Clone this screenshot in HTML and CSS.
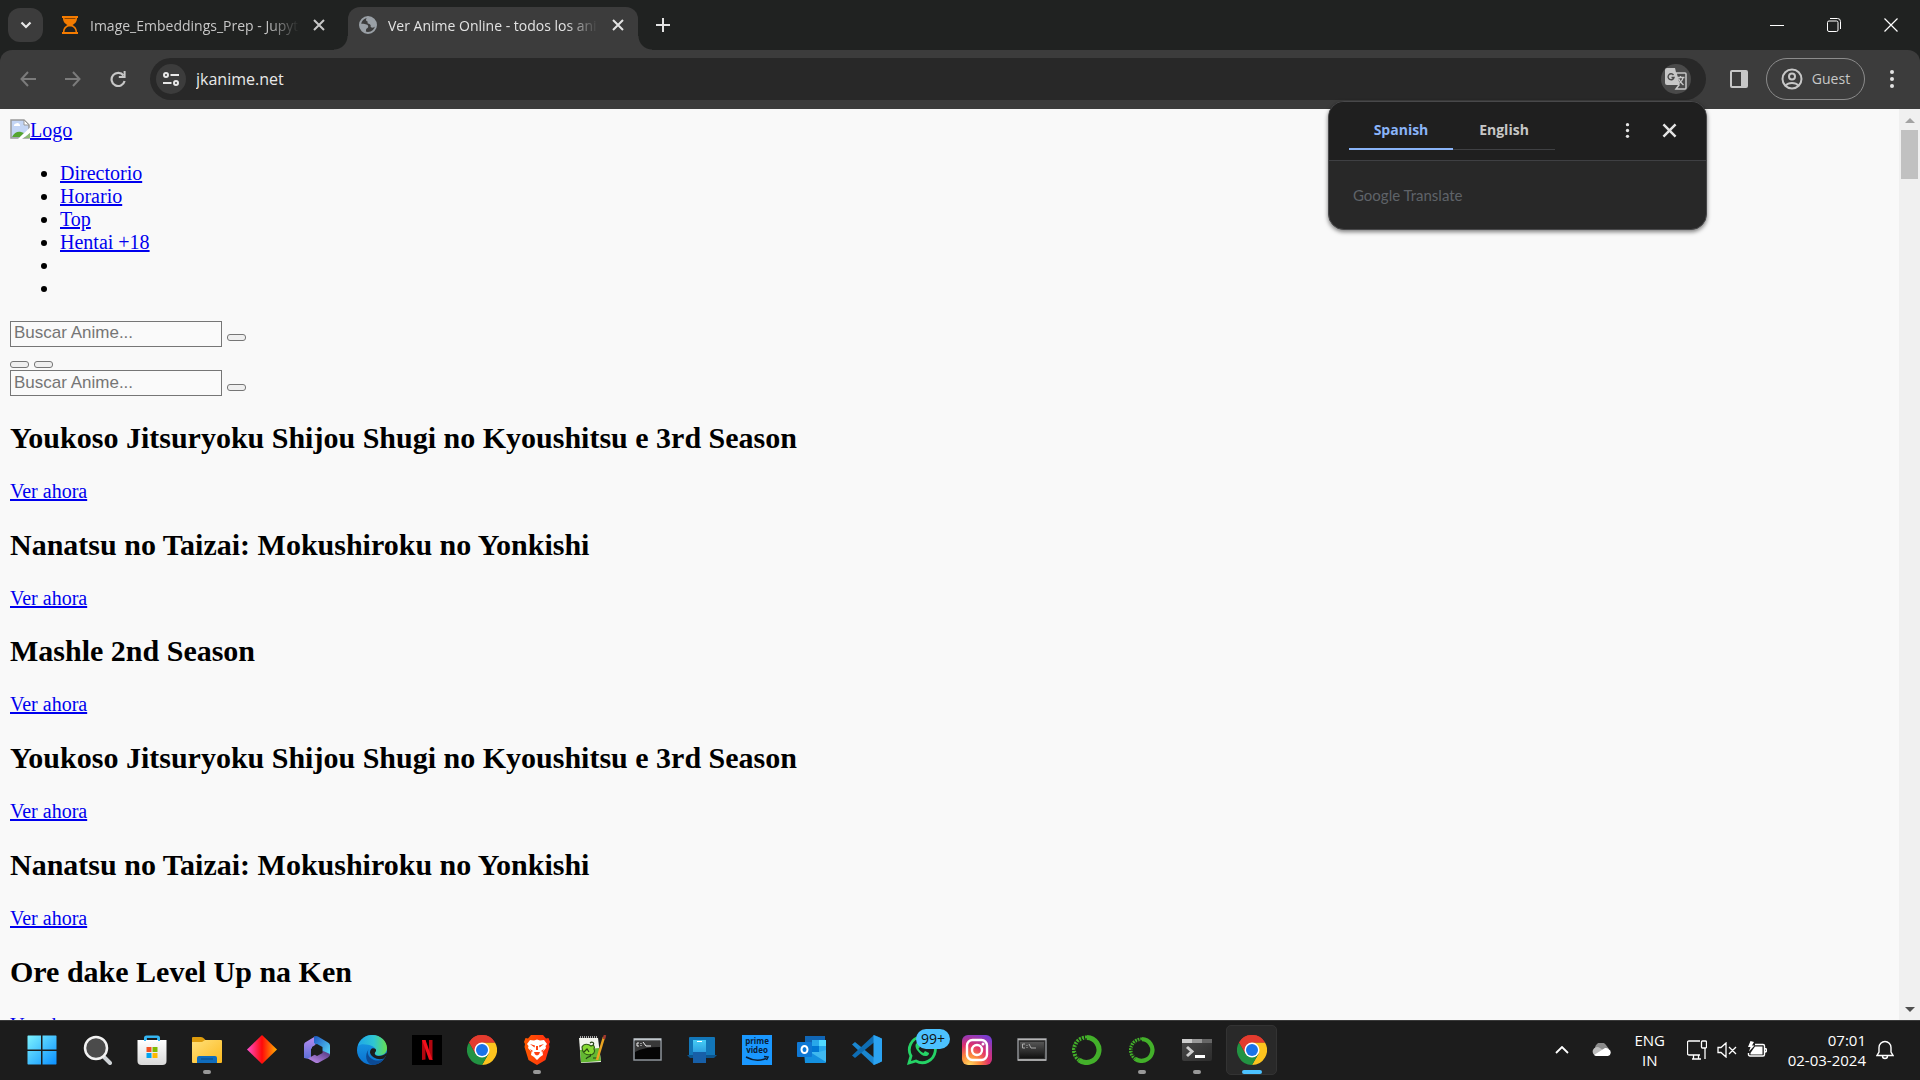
FILE: index.html
```html
<!DOCTYPE html>
<html lang="es">
<head>
<meta charset="utf-8">
<meta name="viewport" content="width=device-width, initial-scale=1">
<title>Ver Anime Online - todos los animes</title>
<link rel="stylesheet" href="styles.css">
</head>
<body>
<svg class="defs" width="0" height="0" aria-hidden="true">
  <defs>
    <linearGradient id="g-win" x1="0" y1="0" x2="1" y2="1"><stop offset="0" stop-color="#7df3ff"/><stop offset="1" stop-color="#0a8fff"/></linearGradient>
    <linearGradient id="g-store" x1="0" y1="0" x2="0" y2="1"><stop offset="0" stop-color="#fff"/><stop offset="1" stop-color="#d9d9d9"/></linearGradient>
    <linearGradient id="g-folder" x1="0" y1="0" x2="1" y2="1"><stop offset="0" stop-color="#ffe07a"/><stop offset="1" stop-color="#fcb91e"/></linearGradient>
    <linearGradient id="g-diamond"><stop offset="0" stop-color="#ff4fd0"/><stop offset=".5" stop-color="#ff0a0a"/><stop offset="1" stop-color="#ffb300"/></linearGradient>
    <linearGradient id="g-m1" x1="0" y1="0" x2="0" y2="1"><stop offset="0" stop-color="#b98cf0"/><stop offset="1" stop-color="#5a6fd8"/></linearGradient>
    <linearGradient id="g-m2" x1="0" y1="0" x2="1" y2="1"><stop offset="0" stop-color="#1c57c4"/><stop offset="1" stop-color="#5fe0fb"/></linearGradient>
    <linearGradient id="g-m3" x1="0" y1="1" x2="1" y2="0"><stop offset="0" stop-color="#c893f5"/><stop offset="1" stop-color="#4a3277"/></linearGradient>
    <linearGradient id="g-edge" x1="0" y1="0" x2="1" y2="0"><stop offset="0" stop-color="#1fa7e8"/><stop offset=".55" stop-color="#2fc6d3"/><stop offset="1" stop-color="#66e04e"/></linearGradient>
    <linearGradient id="g-edge2" x1="0" y1="0" x2="0" y2="1"><stop offset="0" stop-color="#1ba0e6"/><stop offset="1" stop-color="#0a70d0"/></linearGradient>
    <linearGradient id="g-brave" x1="0" y1="0" x2="1" y2="0"><stop offset="0" stop-color="#ff5a00"/><stop offset="1" stop-color="#ff2a10"/></linearGradient>
    <linearGradient id="g-phone" x1="0" y1="0" x2="0" y2="1"><stop offset="0" stop-color="#46cdf5"/><stop offset="1" stop-color="#1778cf"/></linearGradient>
    <radialGradient id="g-insta" cx=".25" cy="1" r="1.1"><stop offset="0" stop-color="#ffd860"/><stop offset=".3" stop-color="#fd8a3c"/><stop offset=".6" stop-color="#e1306c"/><stop offset="1" stop-color="#7a3cd0"/></radialGradient>
    <linearGradient id="g-term" x1="0" y1="0" x2="1" y2="1"><stop offset="0" stop-color="#4a4a4a"/><stop offset="1" stop-color="#2c2c2c"/></linearGradient>
    <linearGradient id="g-gloss" x1="0" y1="0" x2="0" y2="1"><stop offset="0" stop-color="#555"/><stop offset="1" stop-color="#111"/></linearGradient>
    <symbol id="i-close" viewBox="0 0 14 14"><path d="M2 2l10 10M12 2L2 12" fill="none" stroke="currentColor" stroke-width="2"/></symbol>
    <symbol id="i-dots" viewBox="0 0 6 20"><circle cx="3" cy="3" r="2" fill="currentColor"/><circle cx="3" cy="10" r="2" fill="currentColor"/><circle cx="3" cy="17" r="2" fill="currentColor"/></symbol>
    <symbol id="i-chrome" viewBox="0 0 30 30">
      <path d="M15 15L2 7.500A15 15 0 0 1 28 7.500H15z" fill="#e33b2e"/>
      <path d="M15 7.500H28A15 15 0 0 1 15 30L21.500 18.800z" fill="#fcc31e"/>
      <path d="M2 7.500A15 15 0 0 0 15 30L21.500 18.800 8.500 18.800z" fill="#229342"/>
      <path d="M2 7.500L8.500 18.800 15 15V7.500H28A15 15 0 0 0 2 7.500z" fill="#e33b2e"/>
      <circle cx="15" cy="15" r="7.500" fill="#fff"/><circle cx="15" cy="15" r="6" fill="#1a73e8"/>
    </symbol>
    <symbol id="i-conda" viewBox="0 0 30 30">
      <path d="M15 2.500A12.500 12.500 0 1 1 7 25" fill="none" stroke="#43b02a" stroke-width="5"/>
      <path d="M15 2.500A12.500 12.500 0 0 0 7 25" fill="none" stroke="#43b02a" stroke-width="4" stroke-dasharray="2 1"/>
      <path d="M15 4A11 11 0 0 0 8 24" fill="none" stroke="#1c1c1c" stroke-width="1" stroke-dasharray="2 2"/>
    </symbol>
  </defs>
</svg>

<header class="browser">
  <div class="tabstrip">
    <button class="tab-search" aria-label="Search tabs"><svg width="12" height="8" viewBox="0 0 12 8"><path d="M1.500 1.500L6 6l4.500-4.500" fill="none" stroke="#e8e8e8" stroke-width="2.200"/></svg></button>
    <div class="tab">
      <svg class="favicon" viewBox="0 0 18 18"><path d="M1 0h16v2h-1c0 4-2 5.500-4.500 7 2.500 1.500 4.500 3 4.500 7h1v2H1v-2h1c0-4 2-5.500 4.500-7C4 7.500 2 6 2 2H1z" fill="#f57c00"/><path d="M3.500 16c0-3.500 2.500-5.500 5.500-5.500s5.500 2 5.500 5.500z" fill="#202221"/><path d="M3.500 2h11v1h-11z" fill="#8a4400"/></svg>
      <span class="tab-title">Image_Embeddings_Prep - Jupyter Notebook</span>
      <button class="tab-close" aria-label="Close tab"><svg width="14" height="14"><use href="#i-close"/></svg></button>
    </div>
    <div class="tab active">
      <svg class="favicon" viewBox="0 0 18 18"><circle cx="9" cy="9" r="8" fill="none" stroke="#9aa0a6" stroke-width="2"/><path d="M9 1c-1 1-2 1.500-2 3 0 1 1 1 1.500 1.500S8 7 9 7.500s2 .500 2.500 1.500-.500 2 1 2.500 3-.500 4-1A8 8 0 0 0 9 1zM1.500 8c2-.500 4.500 0 6 .500 1.500.500 2 1.500 1.500 3-.500 1-2 1-2 2.500 0 1 0 2-.500 2.500A8 8 0 0 1 1.500 8z" fill="#9aa0a6"/></svg>
      <span class="tab-title">Ver Anime Online - todos los animes</span>
      <button class="tab-close" aria-label="Close tab"><svg width="14" height="14"><use href="#i-close"/></svg></button>
    </div>
    <button class="new-tab" aria-label="New tab"><svg width="14" height="14" viewBox="0 0 14 14"><path d="M7 0v14M0 7h14" stroke="currentColor" stroke-width="2"/></svg></button>
    <div class="window-controls">
      <button aria-label="Minimize"><svg width="14" height="14" viewBox="0 0 14 14"><path d="M0 7.500h14" stroke="#fff"/></svg></button>
      <button aria-label="Restore"><svg width="14" height="14" viewBox="0 0 14 14"><rect x=".5" y="3" width="10.500" height="10.500" rx="1.500" fill="none" stroke="#fff"/><path d="M3 .5h7.500a3 3 0 0 1 3 3V11" fill="none" stroke="#fff"/></svg></button>
      <button aria-label="Close window"><svg width="14" height="14" viewBox="0 0 14 14"><path d="M.5.500l13 13M13.500.500l-13 13" stroke="#fff" stroke-width="1.200"/></svg></button>
    </div>
  </div>

  <div class="toolbar">
    <nav class="nav-buttons" aria-label="History">
      <button class="dim" aria-label="Back"><svg width="16" height="16" viewBox="0 0 16 16"><path d="M8 1L1.500 8 8 15M1.500 8H16" fill="none" stroke="currentColor" stroke-width="2"/></svg></button>
      <button class="dim" aria-label="Forward"><svg width="16" height="16" viewBox="0 0 16 16"><path d="M8 1l6.500 7L8 15M14.500 8H0" fill="none" stroke="currentColor" stroke-width="2"/></svg></button>
      <button aria-label="Reload"><svg width="16" height="16" viewBox="0 0 16 16"><path d="M13.500 4.500A6.600 6.600 0 1 0 14.600 10" fill="none" stroke="currentColor" stroke-width="2.200"/><path d="M15.600 0v7H8.800V5h4.800V0z" fill="currentColor"/></svg></button>
    </nav>
    <div class="omnibox">
      <button class="round site-info" aria-label="View site information"><svg width="16" height="14" viewBox="0 0 16 14"><g fill="none" stroke="#e8e8e8" stroke-width="2"><circle cx="3" cy="3" r="2"/><path d="M7.500 3H16M0 11h8.500"/><circle cx="13" cy="11" r="2"/></g></svg></button>
      <input class="address" type="text" value="jkanime.net" aria-label="Address">
      <button class="round translate" aria-label="Translate this page"><svg width="22" height="22" viewBox="0 0 22 22"><path d="M2 0h8l4 17H2a2 2 0 0 1-2-2V2a2 2 0 0 1 2-2z" fill="#c7c7c7"/><path d="M8.500 7A3 3 0 1 0 9 9.500H6.500" fill="none" stroke="#4a4a4a" stroke-width="1.400"/><path d="M11 5h9a1 1 0 0 1 1 1v14a1 1 0 0 1-1 1h-9l3-4z" fill="none" stroke="#c7c7c7" stroke-width="1.500"/><path d="M12 9.500h7.500M15.500 8v1.500M18 9.500c-.5 3-2.500 5-5 6.500M13.500 10.500c.5 2 2.500 4 5 6.500" fill="none" stroke="#c7c7c7" stroke-width="1.300"/></svg></button>
      <section class="translate-popup" aria-label="Google Translate">
        <div class="popup-head">
          <div class="langs" role="tablist"><button class="lang selected" role="tab">Spanish</button><button class="lang" role="tab">English</button></div>
          <button class="popup-icon" aria-label="Translate options"><svg width="5" height="17"><use href="#i-dots"/></svg></button>
          <button class="popup-icon" aria-label="Close"><svg width="17" height="17"><use href="#i-close"/></svg></button>
        </div>
        <div class="popup-body"><b>Google</b> Translate</div>
      </section>
    </div>
    <button class="side-panel" aria-label="Side panel"><svg width="18" height="18" viewBox="0 0 18 18"><path d="M2 0h14a2 2 0 0 1 2 2v14a2 2 0 0 1-2 2H2a2 2 0 0 1-2-2V2a2 2 0 0 1 2-2zm0 2v14h9V2z" fill="#c7c7c7" fill-rule="evenodd"/></svg></button>
    <button class="profile"><svg width="22" height="22" viewBox="0 0 22 22"><g fill="none" stroke="#c7c7c7" stroke-width="2"><circle cx="11" cy="11" r="9.500"/><circle cx="11" cy="8.500" r="3"/><path d="M4.500 17.500c3-3.500 10-3.500 13 0"/></g></svg>Guest</button>
    <button class="menu" aria-label="Menu"><svg width="6" height="20"><use href="#i-dots"/></svg></button>
  </div>
</header>

<div class="viewport">
  <main class="page">
    <div><a href="#"><svg class="broken" width="20" height="20" viewBox="0 0 20 20"><path d="M1 1h13l5 5v13H1z" fill="#c3d5f5" stroke="#999" stroke-width="1.500"/><path d="M14 1v5h5z" fill="#fff" stroke="#999"/><path d="M4 6.500a2 2 0 0 1 2-2 2.500 2.500 0 0 1 4 1.500v1H4z" fill="#fff"/><path d="M2 18c2-4.500 6-6 9-5l3 1-4 4z" fill="#55a52f"/><path d="M20 8.500L8 20h4l8-6z" fill="#fff"/><path d="M20 14l-6 5h6z" fill="#8cba70"/></svg>Logo</a></div>
    <ul>
      <li><a href="#">Directorio</a></li>
      <li><a href="#">Horario</a></li>
      <li><a href="#">Top</a></li>
      <li><a href="#">Hentai +18</a></li>
      <li></li>
      <li></li>
    </ul>
    <form><input class="search" type="text" placeholder="Buscar Anime..." aria-label="Buscar Anime"> <button class="blank" type="button" aria-label="Buscar"></button></form>
    <div><button class="blank" type="button" aria-label="Menu"></button> <button class="blank" type="button" aria-label="Cuenta"></button></div>
    <form><input class="search" type="text" placeholder="Buscar Anime..." aria-label="Buscar Anime"> <button class="blank" type="button" aria-label="Buscar"></button></form>
    <h2>Youkoso Jitsuryoku Shijou Shugi no Kyoushitsu e 3rd Season</h2>
    <a href="#">Ver ahora</a>
    <h2>Nanatsu no Taizai: Mokushiroku no Yonkishi</h2>
    <a href="#">Ver ahora</a>
    <h2>Mashle 2nd Season</h2>
    <a href="#">Ver ahora</a>
    <h2>Youkoso Jitsuryoku Shijou Shugi no Kyoushitsu e 3rd Season</h2>
    <a href="#">Ver ahora</a>
    <h2>Nanatsu no Taizai: Mokushiroku no Yonkishi</h2>
    <a href="#">Ver ahora</a>
    <h2>Ore dake Level Up na Ken</h2>
    <a href="#">Ver ahora</a>
  </main>
  <div class="scrollbar" aria-hidden="true">
    <svg width="10" height="5" viewBox="0 0 10 5"><path d="M0 5l5-5 5 5z" fill="#a3a3a3"/></svg>
    <div class="thumb"></div>
    <svg width="10" height="5" viewBox="0 0 10 5"><path d="M0 0l5 5 5-5z" fill="#505050"/></svg>
  </div>
</div>

<footer class="taskbar">
  <div class="apps">
    <button class="app" aria-label="Start"><svg viewBox="0 0 30 30"><path d="M1 .5h13v14H.500V1zM15.500.500H29l.5.500v13.500h-14zM.500 16H14v13.500H1l-.5-.5zM15.500 16h14v13l-.5.500H15.500z" fill="url(#g-win)"/></svg></button>
    <button class="app" aria-label="Search"><svg viewBox="0 0 30 30"><path d="M22 22l6 6" stroke="#cfd3d6" stroke-width="4" stroke-linecap="round"/><circle cx="14" cy="13" r="11" fill="#4b4b4b" stroke="#f2f2f2" stroke-width="2.500"/></svg></button>
    <button class="app" aria-label="Microsoft Store"><svg viewBox="0 0 30 30"><path d="M9 8V3q0-1 1-1h10q1 0 1 1v5" fill="none" stroke="#29a9ea" stroke-width="2"/><path d="M.500 5h29v21a4 4 0 0 1-4 4h-21a4 4 0 0 1-4-4z" fill="url(#g-store)"/><path d="M8 6V3q0-1.500 1.500-1.500h11Q22 1.500 22 3v3" fill="none" stroke="#37b7f2" stroke-width="2"/><path d="M9.500 12h5v5h-5z" fill="#f25022"/><path d="M15.500 12h5v5h-5z" fill="#7fba00"/><path d="M9.500 18h5v5h-5z" fill="#00a4ef"/><path d="M15.500 18h5v5h-5z" fill="#ffb900"/></svg></button>
    <button class="app running" aria-label="File Explorer"><svg viewBox="0 0 30 30"><path d="M0 3q0-1 1-1h8q2 0 3 1.500L13.500 5H28v6H0z" fill="#dd9b0c"/><path d="M0 7h10l3-2h16q1 0 1 1v21q0 1-1 1H1q-1 0-1-1z" fill="url(#g-folder)"/><path d="M5 28v-5q0-2 2-2h16q2 0 2 2v5z" fill="#0f6cbd"/><path d="M9 24h12" stroke="#0a4a86"/></svg></button>
    <button class="app" aria-label="Power Automate"><svg viewBox="0 0 30 30"><path d="M15 0l15 14.500L15 29 0 14.500z" fill="url(#g-diamond)"/></svg></button>
    <button class="app" aria-label="Microsoft 365"><svg viewBox="0 0 30 30"><path d="M13 1.500L3 7.500Q2 8 2 10v13l7 1.500V14l4.500-4z" fill="url(#g-m1)"/><path d="M12 1.500q2-1 4 0l10 6q2 1 2 3V20l-8 2v-9L12 8z" fill="url(#g-m2)"/><path d="M28 19q0 2-2 3.500l-9 5q-2 1-4 0l-7-4 14-8z" fill="url(#g-m3)"/><path d="M15 9l5.500 3v6L15 21l-5-3v-6z" fill="#1c1c1c"/></svg></button>
    <button class="app" aria-label="Edge"><svg viewBox="0 0 30 30"><circle cx="15" cy="15" r="15" fill="url(#g-edge2)"/><path d="M1 11C3 4 9 0 15 0c9 0 15 6.500 15 13 0 5-4 7.500-8 7.500-3 0-5-1.500-4-3s1-5-3-6.500S4 8 1 11z" fill="url(#g-edge)"/><path d="M12 14c-3 4 0 9 5 11 4 1.500 8 0 10-1.500-3 5-8 6.500-12 6.500-6-2-8-10-3-16z" fill="#0c4a94"/><path d="M18 17.500c-1 2 1 3.500 4 3.500 3 0 6-1.500 7.500-3.500l.5 2-3 4c-6 2-13-1-14-6 0-3 2-5 4-4 2 0 3 2 1 4z" fill="#1c1c1c"/></svg></button>
    <button class="app" aria-label="Netflix"><svg viewBox="0 0 30 30"><path d="M0 0h30v30H0z"/><path d="M10 5h3.500v19.500L10 25zM17 5h3.500v20l-3.500-.5z" fill="#b1060f"/><path d="M10 5h3.500l7 20-3.500-.5z" fill="#f0101c"/></svg></button>
    <button class="app" aria-label="Chrome"><svg><use href="#i-chrome"/></svg></button>
    <button class="app running" aria-label="Brave"><svg viewBox="0 0 30 30"><path d="M9 0h12l3 3.500 2.500-.5 1.500 4-1 2 .5 3-4 13-8.500 5-8.500-5-4-13L3 9 2 7l1.500-4 2.500.500z" fill="url(#g-brave)"/><path d="M8 5l4 .5 3-1 3 1L22 5l3 4-1.500 2 .5 2-3.500 4 .5 3-3 2-3 3-3-3-3-2 .5-3L6 13l.5-2L5 9z" fill="#fff"/><path d="M8 9l5 1.500-.5 2zM22 9l-5 1.500.5 2zM12 17h6l-1 2.500-2 1-2-1zM14 11h2v4h-2zM8 14l3 2-1.500 1zM22 14l-3 2 1.500 1z" fill="#ff4010"/></svg></button>
    <button class="app" aria-label="Notepad++"><svg viewBox="0 0 30 30"><path d="M2 3h19l3 24-20 1z" fill="#f2f4ee"/><path d="M3 15l19-2 2 13-20 1.500z" fill="#63b832"/><path d="M3 2h18" stroke="#aaa" stroke-width="2" stroke-dasharray="1 1"/><path d="M5 12c2-4 7-3 9-1 3-2 4 1 3 3 2 3-1 6-4 6-5 0-8-3-8-8z" fill="#86d934" stroke="#315a18" stroke-width="1.200"/><path d="M7 17l3-3 2 3M9 24c2-4 6-1 4-5M16 23h5M13 8c2-2 5 0 3 2" fill="none" stroke="#254314" stroke-width="1.200"/><path d="M27 2L20 25" stroke="#e9a321" stroke-width="2.500"/><path d="M28 0l-1 4" stroke="#a43a30" stroke-width="2.500"/></svg></button>
    <button class="app" aria-label="Command Prompt"><svg viewBox="0 0 30 30"><path d="M2 4h27v21H2z" fill="#050505" stroke="#8d949b" stroke-width="1.500"/><path d="M3 6h25v6Q12 12 3 17z" fill="#383838"/><path d="M2 4.500h27" stroke="#c3c8cc" stroke-width="2"/><path d="M7 8H5v3h2M9 8v1M9 10v1M11 7l3 4h5" fill="none" stroke="#eee"/></svg></button>
    <button class="app" aria-label="Phone Link"><svg viewBox="0 0 30 30"><path d="M2 3q0-1 1-1h24q1 0 1 1v18H2z" fill="#1276b8"/><path d="M0 20h30l-3 3H3z" fill="#0b558f"/><path d="M6 5h13v23H6z" fill="url(#g-phone)"/><path d="M6 17h13v11H6z" fill="#175fa8"/><path d="M10 6.500h5" stroke="#fff"/></svg></button>
    <button class="app" aria-label="Prime Video"><svg viewBox="0 0 30 30"><path d="M0 0h30v30H0z" fill="#1a98ff"/><text x="15" y="9" class="prime">prime</text><text x="15" y="18" class="prime">video</text><path d="M4 22q10 5.500 20 1.500M22 21.500l4 .5-1.500 3" fill="none" stroke="#0b2036" stroke-width="1.500"/></svg></button>
    <button class="app" aria-label="Outlook"><svg viewBox="0 0 30 30"><path d="M8 1h20v15H8z" fill="#1066b5"/><path d="M15 5h7v6h-7z" fill="#28a8ea"/><path d="M22 5h7v6h-7z" fill="#50d9ff"/><path d="M15 11h7v6h-7z" fill="#0078d4"/><path d="M22 11h7v6h-7z" fill="#28a8ea"/><path d="M7 17h22v10q0 1-1 1H8z" fill="#1490df"/><path d="M29 15v12L13 17h9z" fill="#3fb8ef"/><rect y="7" width="15" height="15" rx="1" fill="#0f78d4"/><ellipse cx="7.500" cy="14.500" rx="3" ry="3.500" fill="none" stroke="#fff" stroke-width="2"/></svg></button>
    <button class="app" aria-label="Visual Studio Code"><svg viewBox="0 0 30 30"><path d="M0 9.500l3-2.500 25 20.500L22 30z" fill="#1a86d0"/><path d="M0 20.500l3 2.500 25-20.500L22 0z" fill="#0e6db4"/><path d="M21.500 0L30 3.500v23L21.500 30z" fill="#2ba3f2"/></svg></button>
    <button class="app" aria-label="WhatsApp"><svg viewBox="0 0 30 30"><path d="M2 28l2-7A13 13 0 1 1 9 26z" fill="#1c1c1c" stroke="#25d366" stroke-width="2.800"/><path d="M10 8c-2 1-2 4 0 7 3 4 6 6.500 9.500 6 2-.5 2.500-2 2.500-3l-4-2-1.500 2c-2-.5-4-2.500-5-4.500l1.500-1.500-1.500-4z" fill="#25d366"/></svg><span class="badge">99+</span></button>
    <button class="app" aria-label="Instagram"><svg viewBox="0 0 30 30"><rect width="30" height="30" rx="6" fill="url(#g-insta)"/><g fill="none" stroke="#fff" stroke-width="2.400"><rect x="5" y="5" width="20" height="20" rx="5.500"/><circle cx="15" cy="15" r="5"/></g><circle cx="21" cy="9" r="1.500" fill="#fff"/></svg></button>
    <button class="app" aria-label="Console"><svg viewBox="0 0 30 30"><path d="M1 4h28v21H1z" fill="#2b2b2b" stroke="#8c8f92" stroke-width="1.500"/><path d="M3 7h24v16H3z" fill="url(#g-gloss)"/><path d="M1 4.500h28M1 25h28" stroke="#b5b5b5" stroke-width="1.500"/><path d="M8 9H5.500v4H8M10 10v1M10 12v1M12 9l2 4h5" fill="none" stroke="#aaa"/></svg></button>
    <button class="app" aria-label="Anaconda"><svg><use href="#i-conda"/></svg></button>
    <button class="app running" aria-label="Anaconda Navigator"><svg class="small"><use href="#i-conda"/></svg></button>
    <button class="app running" aria-label="Terminal"><svg viewBox="0 0 30 30"><path d="M0 4h30v20q0 2-2 2H2q-2 0-2-2z" fill="url(#g-term)"/><path d="M0 4h10v4H0z" fill="#ccc"/><path d="M10 4h10v4H10z" fill="#999"/><path d="M20 4h10v4H20z" fill="#666"/><path d="M5 12l5 4.500L5 21" fill="none" stroke="#ccc" stroke-width="3"/><path d="M13 21.500h10" stroke="#fff" stroke-width="3"/></svg></button>
    <button class="app current" aria-label="Chrome window"><svg><use href="#i-chrome"/></svg></button>
  </div>
  <div class="tray">
    <button class="chevron" aria-label="Hidden icons"><svg width="14" height="8" viewBox="0 0 14 8"><path d="M1 7l6-6 6 6" fill="none" stroke="#fff" stroke-width="1.800"/></svg></button>
    <button class="cloud" aria-label="OneDrive"><svg width="20" height="14" viewBox="0 0 20 14"><path d="M4 9a6 6 0 0 1 10-7l3 4z" fill="#8b8b8b"/><path d="M5 13a4.500 4.500 0 1 1 3-8l6 4-2 4z" fill="#bdbdbd"/><path d="M2 12l11-7a4 4 0 0 1 3.500 1A3.700 3.700 0 0 1 16 13H4z" fill="#fff"/></svg></button>
    <div class="language">ENG<br>IN</div>
    <div class="status">
      <svg width="20" height="20" viewBox="0 0 20 20"><path d="M13 1H2q-1.500 0-1.500 1.500v11Q.500 15 2 15h11M18 8v11M5 19h9M6.500 15v4M11.500 15v4" fill="none" stroke="#fff" stroke-width="1.300"/><rect x="14.500" y="1" width="5" height="7" rx="1" fill="none" stroke="#fff" stroke-width="1.300"/></svg>
      <svg width="20" height="16" viewBox="0 0 20 16"><path d="M1 5.500h3l5-4.500v14l-5-4.500H1zM12 5l7 7M19 5l-7 7" fill="none" stroke="#fff" stroke-width="1.300"/></svg>
      <svg width="20" height="18" viewBox="0 0 20 18"><path d="M8 3.500h8q1.500 0 1.500 1.500v8.500q0 1.500-1.500 1.500H3q-1.500 0-1.500-1.500V12M18 7.500q1.500 0 1.500 1.700T18 11" fill="none" stroke="#fff" stroke-width="1.400"/><path d="M8 5.500h7.500v8H3.500V12z" fill="#fff"/><path d="M3.500 0L1 6h2.500L2 10.500 7.500 4.500H5L7 1z" fill="#fff"/></svg>
    </div>
    <div class="clock"><time>07:01</time><br>02-03-2024</div>
    <button class="bell" aria-label="Notifications"><svg width="18" height="20" viewBox="0 0 18 20"><path d="M9 1.500a6 6 0 0 0-6 6V12l-2 3.500h16L15 12V7.500a6 6 0 0 0-6-6zM6.500 16a2.500 2.500 0 0 0 5 0" fill="none" stroke="#fff" stroke-width="1.400"/></svg></button>
  </div>
</footer>
</body>
</html>
```

FILE: styles.css
```css
* { box-sizing: border-box; }

body {
  margin: 0;
  height: 100vh;
  display: flex;
  flex-direction: column;
  overflow: hidden;
  font-family: "Open Sans", "Noto Sans", sans-serif;
}

.defs { position: absolute; }

.browser button,
.taskbar button {
  display: flex;
  align-items: center;
  justify-content: center;
  padding: 0;
  border: 0;
  background: none;
  color: inherit;
  font: inherit;
}

/* Tab strip */
.browser { background: #202221; color: #e3e3e3; }

.tabstrip {
  display: flex;
  height: 50px;
  padding: 7px 1px 0 8px;
}

.browser .tab-search {
  width: 35px;
  height: 34px;
  margin: 1px 6px 0 0;
  border-radius: 12px;
  background: #3c3c3c;
}

.tab {
  position: relative;
  display: flex;
  align-items: center;
  width: 290px;
  padding: 0 13px 7px 11px;
  font-size: 14px;
}
.tab:not(.active) { padding-left: 12px; margin-right: 9px; color: #c7c7c7; }
.tab.active { border-radius: 12px 12px 0 0; background: #3c3c3c; }
.tab.active::before,
.tab.active::after {
  content: "";
  position: absolute;
  bottom: 0;
  width: 14px;
  height: 14px;
}
.tab.active::before { right: 100%; background: radial-gradient(circle at 0 0, #202221 13px, #3c3c3c 14px); }
.tab.active::after { left: 100%; background: radial-gradient(circle at 100% 0, #202221 13px, #3c3c3c 14px); }

.favicon { flex: none; width: 18px; height: 18px; }

.tab-title {
  flex: 1;
  margin: 0 13px 0 11px;
  overflow: hidden;
  white-space: nowrap;
  -webkit-mask-image: linear-gradient(to left, transparent, #000 32px);
  mask-image: linear-gradient(to left, transparent, #000 32px);
}

.new-tab { width: 50px; height: 36px; color: #d0d0d0; }

.window-controls { display: flex; margin-left: auto; }
.window-controls button { width: 57px; height: 35px; }

/* Toolbar */
.toolbar {
  display: flex;
  align-items: center;
  height: 59px;
  padding: 0 6px 2px 5px;
  border-radius: 12px 12px 0 0;
  background: #3c3c3c;
}

.nav-buttons { display: flex; color: #c7c7c7; }
.nav-buttons button { width: 45px; height: 42px; }
.nav-buttons .dim { color: #7b7b7b; }

.omnibox {
  position: relative;
  flex: 1;
  display: flex;
  align-items: center;
  height: 42px;
  margin-left: 10px;
  padding: 0 15px 0 6px;
  border-radius: 21px;
  background: #282828;
}

.browser .round { flex: none; width: 30px; height: 30px; border-radius: 15px; background: #3c3c3c; }
.browser .translate { background: #4a4a4a; }

.address {
  flex: 1;
  min-width: 0;
  margin: 0 10px;
  padding: 1px 0 0;
  border: 0;
  background: none;
  color: #e8e8e8;
  font: 16px "Open Sans", "Noto Sans", sans-serif;
}

.side-panel { width: 18px; height: 42px; margin: 0 18px 0 24px; }

.browser .profile {
  gap: 9px;
  width: 99px;
  height: 42px;
  border: 1px solid #8c8c8c;
  border-radius: 21px;
  color: #c7c7c7;
  font-size: 14px;
}

.menu { width: 44px; height: 42px; margin-left: 5px; color: #c7c7c7; }

/* Translate bubble */
.translate-popup {
  position: absolute;
  z-index: 2;
  top: 43px;
  right: -1px;
  width: 379px;
  border: 1px solid #48484a;
  border-radius: 16px;
  background: #282828;
  box-shadow: 0 2px 4px rgba(0, 0, 0, .5);
  overflow: hidden;
}

.popup-head {
  display: flex;
  align-items: center;
  height: 59px;
  padding: 0 16px 0 20px;
  border-bottom: 1px solid #3f4043;
  background: #1f1f1f;
}

.langs { display: flex; margin-right: auto; }
.browser .lang {
  width: 102px;
  height: 39px;
  padding-bottom: 1px;
  border-bottom: 1px solid #3f4043;
  color: #c7c7c7;
  font-size: 14px;
  font-weight: 700;
}
.browser .lang.selected { width: 104px; padding: 0; border-bottom: 2px solid #8ab4f8; color: #8ab4f8; }

.popup-icon { width: 42px; height: 42px; color: #d0d0d0; }

.popup-body {
  padding: 23px 24px;
  color: #5f6368;
  font: 15px/22px Lato, sans-serif;
}
.popup-body b { font-weight: 400; }

/* Page */
.viewport {
  flex: 1;
  min-height: 0;
  display: flex;
  overflow: hidden;
  background: #f9f9f9;
}

.page {
  flex: 1;
  padding: 10px;
  color: #000;
  font: 20px "Liberation Serif", "Times New Roman", serif;
}
.page a { color: #00e; text-decoration: underline; }
.page ul { margin: 20px 0; padding-left: 50px; }

.broken { vertical-align: -2px; }

.search {
  width: 212px;
  height: 26px;
  padding: 1px 3px 2px;
  border: 1px solid #767676;
  border-radius: 0;
  background: #fafafa;
  font: 17px "Liberation Sans", Arial, sans-serif;
}
.search::placeholder { color: #757575; }

.blank {
  width: 19px;
  height: 7px;
  padding: 2px 8px;
  border: 1px solid #767676;
  border-radius: 3px;
  background: #efefef;
}

.scrollbar {
  display: flex;
  flex-direction: column;
  align-items: center;
  width: 21px;
  padding: 9px 0 8px;
  background: #f0f0f0;
}
.thumb { width: 17px; height: 49px; margin: 7px 0 auto; background: #c1c1c1; }

/* Taskbar */
.taskbar {
  display: flex;
  justify-content: space-between;
  height: 60px;
  padding: 0 26px 1px 14px;
  border-top: 1px solid #3a3a3a;
  background: #1c1c1c;
  color: #fff;
}

.apps { display: flex; }
.taskbar .app { position: relative; width: 55px; }
.app svg { width: 30px; height: 30px; }
.app .small { width: 26px; height: 26px; }

.running::after,
.current::after {
  content: "";
  position: absolute;
  bottom: 5px;
  width: 8px;
  height: 4px;
  border-radius: 2px;
  background: #989898;
}
.current::after { width: 20px; background: #4cc2ff; }
.current::before {
  content: "";
  position: absolute;
  inset: 4px 2px;
  border: 1px solid #333;
  border-radius: 5px;
  background: #292929;
}
.current svg { position: relative; }

.badge {
  position: absolute;
  top: 8px;
  left: 22px;
  width: 34px;
  border-radius: 10px;
  background: #4cc2ff;
  color: #111;
  font-size: 14px;
  line-height: 20px;
}

.prime {
  fill: #0b2036;
  font: 700 8px "Open Sans", sans-serif;
  text-anchor: middle;
}

.tray { display: flex; align-items: center; font-size: 15px; line-height: 20px; }
.chevron { width: 40px; height: 50px; }
.cloud { width: 40px; height: 50px; margin-right: 6px; }
.language { width: 44px; text-align: center; }
.status { display: flex; align-items: center; gap: 10px; margin: 0 21px 0 15px; }
.clock { text-align: right; }
.bell { width: 18px; height: 50px; margin-left: 10px; }
```
